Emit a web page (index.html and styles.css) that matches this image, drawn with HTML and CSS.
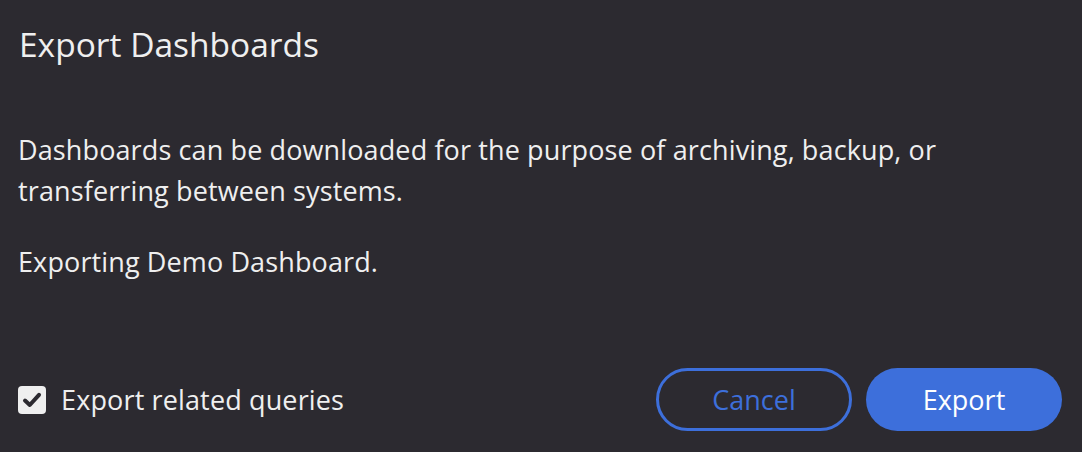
FILE: index.html
```html
<!DOCTYPE html>
<html>
<head>
<meta charset="utf-8">
<link rel="stylesheet" href="styles.css">
</head>
<body>
<div class="dialog">
  <h1 class="title">Export Dashboards</h1>
  <div class="content">
    <p class="para">Dashboards can be downloaded for the purpose of archiving, backup, or transferring between systems.</p>
    <p class="para second">Exporting Demo Dashboard.</p>
  </div>
  <div class="footer">
    <label class="check">
      <span class="box">
        <svg width="22" height="22" viewBox="0 0 22 22"><path d="M4 11.5 L8.8 16 L18 5.8" fill="none" stroke="#2c2a30" stroke-width="4" stroke-linecap="round" stroke-linejoin="round"/></svg>
      </span>
      <span class="check-label">Export related queries</span>
    </label>
    <div class="actions">
      <button class="btn btn-outline">Cancel</button>
      <button class="btn btn-primary">Export</button>
    </div>
  </div>
</div>
</body>
</html>
```
FILE: styles.css
```css
html, body {
  margin: 0;
  padding: 0;
  background: #2c2a30;
}
.dialog {
  width: 1082px;
  height: 452px;
  box-sizing: border-box;
  padding: 21px 20px 21px 18px;
  display: flex;
  flex-direction: column;
  font-family: "Open Sans", "Noto Sans", sans-serif;
  color: #efefef;
}
.title {
  margin: 0 0 0 1px;
  font-size: 33.5px;
  line-height: 46px;
  font-weight: 400;
}
.content {
  margin-top: 62px;
}
.para {
  margin: 0;
  font-size: 27px;
  line-height: 41px;
  letter-spacing: 0.12px;
  width: 940px;
}
.second {
  margin-top: 30px;
}
.footer {
  margin-top: auto;
  display: flex;
  align-items: center;
  justify-content: space-between;
}
.check {
  display: flex;
  align-items: center;
  gap: 15px;
}
.box {
  width: 28px;
  height: 28px;
  border-radius: 4px;
  background: #efefef;
  display: flex;
  align-items: center;
  justify-content: center;
}
.check-label {
  font-size: 27px;
  letter-spacing: 0.14px;
}
.actions {
  display: flex;
  gap: 14px;
}
.btn {
  width: 196px;
  height: 63px;
  border-radius: 32px;
  font-family: "Open Sans", "Noto Sans", sans-serif;
  font-size: 27px;
  box-sizing: border-box;
  padding: 0;
}
.btn-outline {
  background: transparent;
  border: 3px solid #3d6fdb;
  color: #3d6fdb;
}
.btn-primary {
  background: #3d6fdb;
  border: none;
  color: #ffffff;
}
```
